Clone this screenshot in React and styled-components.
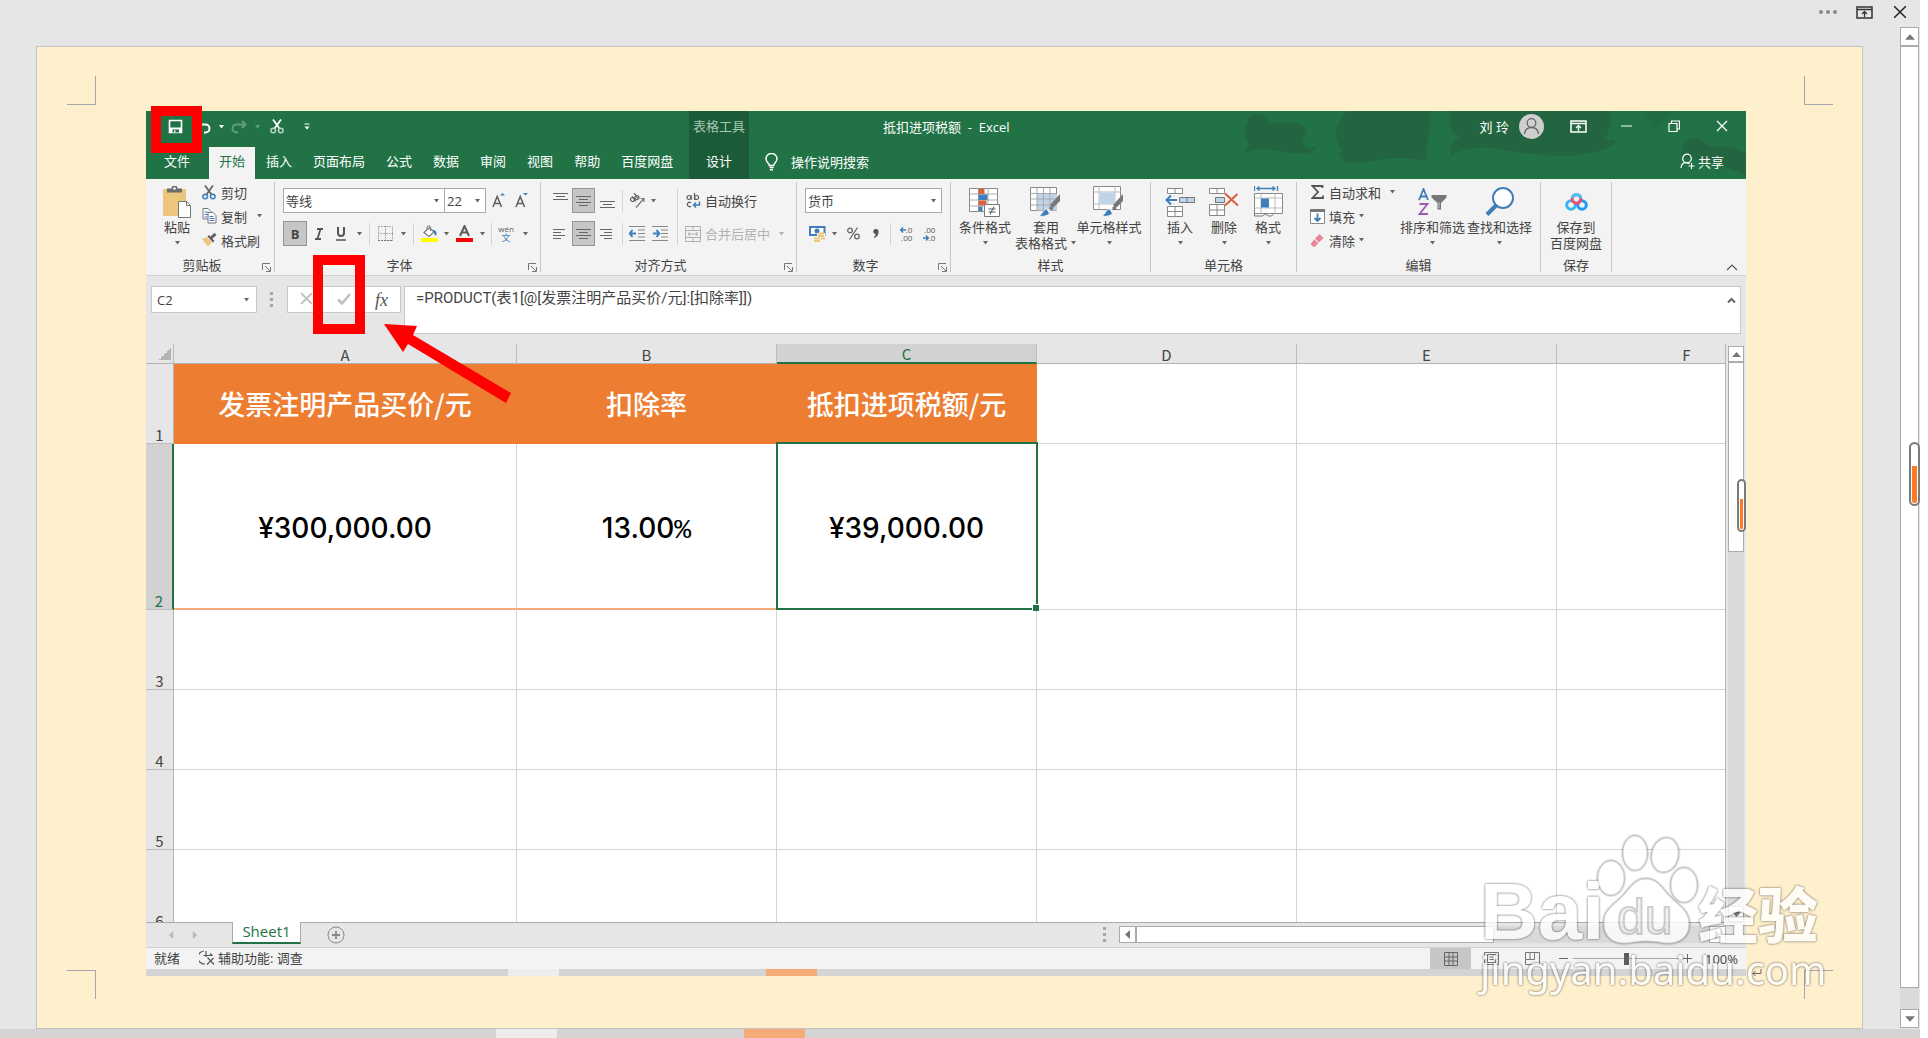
import * as React from "react";
import styled, { createGlobalStyle, css } from "styled-components";

// Styles
const colors = {
  excel: "#217346",
  excelDark: "#1b5b38",
  chrome: "#e6e6e6",
  ribbon: "#f3f3f3",
  line: "#ababab",
  gridLine: "#d4d4d4",
  paper: "#fff0cd",
  orange: "#ed7d31",
  mark: "#ff0000",
  blue: "#3f7dbb",
  text: "#444444",
};

const uiFont = `"Open Sans", "Noto Sans CJK SC", sans-serif`;
const cellFont = `"Noto Sans CJK SC", sans-serif`;

const GlobalStyle = createGlobalStyle`
  * {
    box-sizing: border-box;
  }

  body {
    margin: 0;
    background: #fff;
    font-family: ${uiFont};
    font-size: 13px;
    color: ${colors.text};
  }

  button,
  input,
  select,
  textarea {
    font: inherit;
    color: inherit;
    margin: 0;
    padding: 0;
    border: 0;
    border-radius: 0;
    background: none;
    outline: none;
  }
`;

// Word frame
const Frame = styled.div`
  display: flex;
  flex-direction: column;
  height: 100vh;
  margin-right: 8px;
  background: ${colors.chrome};
  overflow: hidden;
`;

const FrameBar = styled.header`
  display: flex;
  justify-content: flex-end;
  align-items: center;
  height: 27px;
  padding-bottom: 3px;
`;

const FrameButton = styled.button`
  display: flex;
  justify-content: center;
  align-items: center;
  width: ${(p) => p.$width}px;
  height: 20px;
`;

const Workspace = styled.div`
  display: flex;
  flex: 1;
  min-height: 0;
`;

const Sheet = styled.main`
  position: relative;
  display: flex;
  flex: 1;
  min-width: 0;
  margin: 19px 37px 0 36px;
  padding: 64px 116px 52px 109px;
  background: ${colors.paper};
  border: 1px solid #c3c3c3;
`;

const CropMark = styled.span`
  position: absolute;
  width: 29px;
  height: 29px;
  border: 0 solid #a6a7ad;
  ${(p) => (p.$top ? "top: 29px; border-bottom-width: 1px;" : "bottom: 29px; border-top-width: 1px;")}
  ${(p) => (p.$left ? "left: 30px; border-right-width: 1px;" : "right: 29px; border-left-width: 1px;")}
`;

const TaskStrip = styled.div`
  flex: none;
  height: ${(p) => p.$height}px;
  background: linear-gradient(#f4ab77, #f4ab77) ${(p) => p.$orange}px 0 / ${(p) => p.$size}px 100% no-repeat,
    linear-gradient(#ededed, #ededed) ${(p) => p.$light}px 0 / ${(p) => p.$size}px 100% no-repeat, #d4d4d4;
`;

// Scroll bars
const ScrollColumn = styled.div`
  position: relative;
  display: flex;
  flex-direction: column;
  flex: none;
  width: ${(p) => p.$size}px;
  margin: ${(p) => p.$margin};
  background: #dadada;
`;

const ScrollRow = styled.div`
  display: flex;
  width: 607px;
  height: 17px;
  background: #dadada;
`;

const ScrollButton = styled.button`
  display: flex;
  flex: none;
  justify-content: center;
  align-items: center;
  width: ${(p) => p.$size}px;
  height: ${(p) => p.$size}px;
  background: #fff;
  border: 1px solid ${colors.line};
`;

const Thumb = styled.div`
  flex: ${(p) => p.$flex};
  background: #fff;
  border: 1px solid ${colors.line};
`;

const Spacer = styled.div`
  flex: ${(p) => p.$flex || 1};
`;

const Pill = styled.span`
  position: absolute;
  top: ${(p) => p.$top}px;
  right: ${(p) => p.$right}px;
  width: ${(p) => p.$width}px;
  height: ${(p) => p.$height}px;
  padding: 1px;
  border: 2px solid #7b7b7b;
  border-radius: 6px;
  background: linear-gradient(#fff 36%, #ff7a21 36%) content-box, #fff;
`;

// Excel window
const Excel = styled.section`
  position: relative;
  display: flex;
  flex-direction: column;
  flex: 1;
  min-width: 0;
  background: ${colors.chrome};
`;

const Header = styled.div`
  position: relative;
  display: grid;
  grid-template-columns: 543px 60px 1fr;
  grid-template-rows: 36px 32px;
  flex: none;
  background: ${colors.excel};
  color: #fff;
`;

const Doodles = styled.svg`
  position: absolute;
  top: 0;
  right: 0;
  opacity: 0.85;
`;

const QuickAccess = styled.div`
  display: flex;
  align-items: center;
  padding: 0 0 5px 15px;
`;

const QuickButton = styled.button`
  display: flex;
  justify-content: center;
  align-items: center;
  width: ${(p) => p.$width}px;
  height: 24px;
  opacity: ${(p) => (p.disabled ? 0.3 : 1)};
`;

const ContextLabel = styled.div`
  padding-top: 5px;
  line-height: 20px;
  text-align: center;
  background: ${colors.excelDark};
  color: #a3c7b1;
`;

const TitleArea = styled.div`
  position: relative;
  display: flex;
  align-items: center;
  padding: 0 0 6px 134px;
`;

const DocTitle = styled.h1`
  margin: 0;
  font-size: 13px;
  font-weight: 400;
  white-space: pre;
`;

const UserName = styled.span`
  margin-left: auto;
  margin-right: 10px;
`;

const WindowButtons = styled.div`
  display: flex;
  margin-left: 10px;
`;

const WindowButton = styled.button`
  display: flex;
  justify-content: center;
  align-items: center;
  width: 48px;
  height: 24px;
`;

const Tabs = styled.nav`
  display: flex;
  gap: 1px;
`;

const Tab = styled.button`
  padding: 0 ${(p) => (p.$wide ? 18 : 10)}px 5px;
  ${(p) =>
    p.$active &&
    css`
      background: ${colors.ribbon};
      color: ${colors.excel};
    `}
  ${(p) =>
    p.$context &&
    css`
      background: ${colors.excelDark};
    `}
`;

const SearchArea = styled.div`
  position: relative;
  display: flex;
  justify-content: space-between;
  align-items: center;
  padding: 0 22px 3px 16px;
`;

const HeaderAction = styled.button`
  display: flex;
  align-items: center;
  gap: ${(p) => p.$gap}px;
`;

// Ribbon
const Ribbon = styled.div`
  position: relative;
  display: flex;
  flex: none;
  height: 97px;
  background: ${colors.ribbon};
  border-bottom: 1px solid #d0d0d0;
`;

const Group = styled.div`
  flex: none;
  width: ${(p) => p.$width}px;
  border-right: 1px solid transparent;
  border-image: linear-gradient(transparent 4px, #c6c6c6 4px, #c6c6c6 92px, transparent 92px) 1;
`;

const GroupContent = styled.div`
  display: flex;
  height: 78px;
  padding: 1px 0 0 ${(p) => p.$left}px;
`;

const GroupFooter = styled.div`
  display: flex;
  align-items: center;
  height: 16px;
  line-height: 16px;
`;

const GroupName = styled.span`
  flex: 1;
  text-align: center;
`;

const Launcher = styled.button`
  display: flex;
  align-items: center;
  width: 12px;
  height: 16px;
  margin-left: 4px;
  padding-top: 4px;
`;

const ToolRows = styled.div`
  display: flex;
  flex-direction: column;
  gap: 8px;
  padding-top: 8px;
`;

const ToolRow = styled.div`
  display: flex;
  align-items: center;
  height: 25px;
`;

const Tool = styled.button`
  display: flex;
  flex: none;
  justify-content: center;
  align-items: center;
  width: ${(p) => p.$width}px;
  height: 25px;
  ${(p) =>
    p.$pressed &&
    css`
      background: #c6c6c6;
      border: 1px solid #969696;
    `}
`;

const Divider = styled.span`
  flex: none;
  width: 1px;
  height: ${(p) => p.$height || 22}px;
  margin: 0 ${(p) => p.$gap}px;
  background: ${colors.gridLine};
`;

const SmallColumn = styled.div`
  width: ${(p) => p.$width}px;
`;

const SmallTool = styled.button`
  display: flex;
  align-items: center;
  height: 24px;
  white-space: nowrap;
  color: ${(p) => (p.disabled ? "#b1b1b1" : "inherit")};

  > svg:last-child {
    margin-left: ${(p) => p.$arrowGap}px;
  }
`;

const SmallIcon = styled.span`
  display: flex;
  justify-content: center;
  width: 22px;
  padding-right: 2px;
`;

const BigTool = styled.button`
  display: flex;
  flex-direction: column;
  align-items: center;
  width: ${(p) => p.$width}px;
  padding-top: 4px;
  line-height: 16px;
  white-space: nowrap;
`;

const BigIcon = styled.span`
  display: flex;
  align-items: center;
  height: 35px;
`;

const BigLine = styled.span`
  display: flex;
  align-items: center;
  justify-content: center;
  gap: 3px;
  height: 16px;
`;

const SelectBox = styled.label`
  position: relative;
  display: block;
  width: ${(p) => p.$width}px;
  height: 25px;
  margin-left: ${(p) => (p.$joined ? -1 : 0)}px;
  background: #fff;
  border: 1px solid ${colors.line};

  select {
    width: 100%;
    height: 100%;
    padding-left: 2px;
    appearance: none;
  }

  svg {
    position: absolute;
    top: 10px;
    right: 4px;
    pointer-events: none;
  }
`;

const Collapse = styled.button`
  display: flex;
  align-self: flex-end;
  margin: 0 8px 4px auto;
`;

// Formula bar
const FormulaBar = styled.div`
  display: flex;
  flex: none;
  height: 68px;
  padding: 10px 5px 10px;
`;

const NameBox = styled.div`
  display: flex;
  align-items: center;
  width: 106px;
  height: 27px;
  padding: 0 6px 0 5px;
  background: #fff;
  border: 1px solid #c8c8c8;

  input {
    flex: 1;
    min-width: 0;
  }
`;

const DotHandle = styled.span`
  width: 3px;
  height: 15px;
  margin: ${(p) => p.$margin};
  background: repeating-linear-gradient(#a6a6a6 0 3px, transparent 3px 6px);
`;

const FormulaButtons = styled.div`
  display: flex;
  align-items: center;
  justify-content: space-between;
  width: 114px;
  height: 27px;
  margin-right: 3px;
  padding: 0 12px;
  background: #fff;
  border: 1px solid #c8c8c8;
`;

const FxButton = styled.button`
  font-family: "Liberation Serif", serif;
  font-size: 18px;
  font-style: italic;
  line-height: 24px;
  color: #555;
`;

const FormulaInput = styled.div`
  display: flex;
  flex: 1;
  height: 48px;
  padding: 0 4px 0 11px;
  background: #fff;
  border: 1px solid #c8c8c8;

  textarea {
    flex: 1;
    font-family: Roboto, "Noto Sans CJK SC", sans-serif;
    font-size: 15px;
    line-height: 22px;
    resize: none;
    overflow: hidden;
  }

  button {
    align-self: flex-start;
    padding-top: 3px;
  }
`;

// Grid
const GridArea = styled.div`
  display: flex;
  flex: 1;
  min-height: 0;
  border-bottom: 1px solid ${colors.line};
`;

const GridViewport = styled.div`
  flex: 1;
  min-width: 0;
  overflow: hidden;
  border-right: 1px solid #b4b4b4;
  background: #fff;
`;

const Table = styled.table`
  width: 1671px;
  table-layout: fixed;
  border-collapse: separate;
  border-spacing: 0;
  font-family: ${cellFont};
  font-size: 27px;
  color: #000;

  th,
  td {
    padding: 0;
    text-align: center;
    border-right: 1px solid ${colors.gridLine};
    border-bottom: 1px solid ${colors.gridLine};
  }
`;

const ColumnHead = styled.th`
  && {
    height: 20px;
    font-size: 15px;
    font-weight: 400;
    line-height: 17px;
    vertical-align: bottom;
    color: ${(p) => (p.$active ? colors.excel : colors.text)};
    background: ${(p) => (p.$active ? "#d2d2d2" : colors.chrome)};
    border-right-color: #bdbdbd;
    border-bottom: ${(p) => (p.$active ? `2px solid ${colors.excel}` : "1px solid #b4b4b4")};
  }
`;

const CornerHead = styled(ColumnHead)`
  && {
    background: linear-gradient(135deg, transparent 50%, #b4b4b4 50%) 13px 4px / 12px 12px no-repeat
      ${colors.chrome};
  }
`;

const RowHead = styled.th`
  && {
    height: ${(p) => p.$height}px;
    font-size: 15px;
    font-weight: 400;
    line-height: 17px;
    vertical-align: bottom;
    color: ${(p) => (p.$active ? colors.excel : colors.text)};
    background: ${(p) => (p.$active ? "#d2d2d2" : colors.chrome)};
    border-right: ${(p) => (p.$active ? `2px solid ${colors.excel}` : "1px solid #b4b4b4")};
    border-bottom-color: #bdbdbd;
  }
`;

const Cell = styled.td`
  ${(p) =>
    p.$heading &&
    css`
      && {
        font-weight: 500;
        color: #fff;
        background: ${colors.orange};
        border-color: ${colors.orange};
      }
    `}
  ${(p) =>
    p.$value &&
    css`
      && {
        padding-top: 4px;
        font-family: Inter, sans-serif;
        font-size: 28px;
        font-weight: 500;
        border-bottom: 2px solid #f4a977;
      }
    `}
  ${(p) =>
    p.$selected &&
    css`
      position: relative;

      &:before {
        content: "";
        position: absolute;
        inset: -2px -2px -2px -1px;
        border: 2px solid ${colors.excel};
      }

      &:after {
        content: "";
        position: absolute;
        right: -3px;
        bottom: -3px;
        width: 6px;
        height: 6px;
        background: ${colors.excel};
        border: 1px solid #fff;
        border-width: 1px 0 0 1px;
      }
    `}
`;

const Percent = styled.span`
  font-family: "Liberation Mono", monospace;
  font-weight: 400;
`;

// Sheet tabs and status bar
const SheetBar = styled.div`
  display: flex;
  flex: none;
  height: 24px;
`;

const SheetNav = styled.div`
  display: flex;
  gap: 16px;
  width: 86px;
  padding: 0 0 1px 21px;

  button {
    display: flex;
    align-items: center;
  }
`;

const SheetTab = styled.button`
  width: 69px;
  height: 22px;
  margin-top: -1px;
  padding-bottom: 1px;
  font-size: 15px;
  line-height: 17px;
  color: ${colors.excel};
  background: #fff;
  border: 1px solid ${colors.line};
  border-width: 0 1px 2px;
  border-bottom-color: ${colors.excel};
`;

const AddSheet = styled.button`
  display: flex;
  margin: 3px auto 0 26px;
`;

const ScrollBox = styled.div`
  display: flex;
  padding: 3px 20px 0 0;
`;

const StatusBar = styled.footer`
  display: flex;
  flex: none;
  align-items: stretch;
  height: 22px;
  padding-left: 8px;
  background: ${colors.ribbon};
  border-top: 1px solid #d0d0d0;
`;

const StatusText = styled.span`
  display: flex;
  align-items: center;
  gap: 3px;
  margin-right: 19px;
  padding-bottom: 2px;
`;

const ViewButton = styled.button`
  display: flex;
  justify-content: center;
  align-items: center;
  width: 41px;
  background: ${(p) => (p.$active ? "#c6c6c6" : "transparent")};
`;

const Zoom = styled.div`
  display: flex;
  align-items: center;
  width: 190px;
  margin-left: 3px;
  padding-left: 3px;

  input {
    width: 106px;
    height: 20px;
    margin: 0 4px 0 5px;
    appearance: none;
    background: linear-gradient(#a6a6a6, #a6a6a6) 0 9px / 100% 1px no-repeat;
  }

  input::-webkit-slider-thumb {
    appearance: none;
    width: 5px;
    height: 12px;
    background: #5c5c5c;
  }

  output {
    margin-left: auto;
    padding-right: 8px;
  }
`;

// Tutorial marks
const MarkBox = styled.span`
  position: absolute;
  top: ${(p) => p.$top}px;
  left: ${(p) => p.$left}px;
  width: ${(p) => p.$width}px;
  height: ${(p) => p.$height}px;
  border: 10px solid ${colors.mark};
  pointer-events: none;
`;

const MarkArrow = styled.svg`
  position: absolute;
  top: 212px;
  left: 238px;
  pointer-events: none;
`;

const ReturnMark = styled.svg`
  position: absolute;
  right: 100px;
  bottom: 51px;
`;

const Watermark = styled.div`
  position: absolute;
  right: 34px;
  bottom: 32px;
  width: 348px;
  color: #fff;
  opacity: 0.8;
  filter: drop-shadow(0 0 1px rgba(0, 0, 0, 0.5)) drop-shadow(0 0 1px rgba(0, 0, 0, 0.3));
  pointer-events: none;
`;

const WatermarkRow = styled.div`
  position: relative;
  display: flex;
  align-items: flex-end;
  height: 112px;
`;

const WatermarkLatin = styled.span`
  width: 116px;
  font-family: "Liberation Sans", sans-serif;
  font-size: 80px;
  font-weight: 700;
  line-height: 64px;
`;

const WatermarkPaw = styled.svg`
  flex: none;
  fill: currentColor;
  stroke: #d0d0d0;
`;

const WatermarkDu = styled.span`
  position: absolute;
  left: 137px;
  bottom: 0;
  font-family: "Liberation Sans", sans-serif;
  font-size: 50px;
  line-height: 54px;
  color: #f0f0f0;
  -webkit-text-stroke: 2px #c4c4c4;
`;

const WatermarkCjk = styled.span`
  font-family: ${cellFont};
  font-size: 60px;
  font-weight: 900;
  line-height: 64px;
`;

const WatermarkUrl = styled.div`
  font-family: "Noto Sans", sans-serif;
  font-size: 40px;
  line-height: 52px;
  white-space: nowrap;
`;

// Icons
const Svg = ({ w, h, children, ...rest }) => (
  <svg width={w} height={h} viewBox={`0 0 ${w} ${h}`} fill="none" aria-hidden="true" {...rest}>
    {children}
  </svg>
);

const Arrow = ({ color = "#666" }) => (
  <Svg w={7} h={4}>
    <path d="M1 0h5L3.500 3.500z" fill={color} />
  </Svg>
);

const Triangle = ({ dir = "up", color = "#777", size = 9 }) => {
  const angle = { up: 0, right: 90, down: 180, left: 270 }[dir];
  return (
    <svg width={size} height={size} viewBox="0 0 9 9" aria-hidden="true">
      <path d="M4.500 2L9 7H0z" fill={color} transform={`rotate(${angle} 4.500 4.500)`} />
    </svg>
  );
};

const RibbonOptions = ({ color }) => (
  <Svg w={17} h={13} stroke={color}>
    <path d="M1 1h15v11H1zM1 3.500h15" strokeWidth="1.500" />
    <path d="M8.500 11V5.500M6 8l2.500-2.500L11 8" strokeWidth="1.300" />
  </Svg>
);

const Cross = ({ size = 12, color, width = 1.3 }) => (
  <svg width={size} height={size} viewBox="0 0 12 12" fill="none" stroke={color} strokeWidth={width} aria-hidden="true">
    <path d="M1 1l10 10M11 1L1 11" />
  </svg>
);

const SaveIcon = () => (
  <Svg w={15} h={15} stroke="#fff">
    <path d="M1.500 1.500h12v12h-12z" strokeWidth="1.600" />
    <path d="M1.500 8.500h12v5h-12z" fill="#fff" stroke="none" />
    <path d="M4.500 10.500h6.500v3H4.500z" fill={colors.excel} stroke="none" />
    <path d="M6 11.500h1.500v2H6z" fill="#fff" stroke="none" />
  </Svg>
);

const UndoIcon = ({ flip }) => (
  <Svg w={16} h={14} stroke="#fff" strokeWidth="2">
    <path
      d="M5 1L1.500 4.500 5 8M2 4.500h8.500a4 4 0 010 8H9"
      transform={flip ? "matrix(-1 0 0 1 16 0)" : undefined}
    />
  </Svg>
);

const ScissorsIcon = ({ blade, ring }) => (
  <Svg w={14} h={15} strokeWidth="1.500">
    <path d="M3 0.500l6.500 9M11 0.500l-6.500 9" stroke={blade} strokeWidth="1.800" />
    <circle cx="3.200" cy="11.500" r="2.300" stroke={ring} />
    <circle cx="10.800" cy="11.500" r="2.300" stroke={ring} />
  </Svg>
);

const QuickMore = () => (
  <Svg w={6} h={8}>
    <path d="M0.500 1h5" stroke="#fff" />
    <path d="M0.500 3.500h5L3 6.500z" fill="#fff" />
  </Svg>
);

const AvatarIcon = () => (
  <Svg w={25} h={25}>
    <circle cx="12.500" cy="12.500" r="12.500" fill="#cfcfcf" />
    <circle cx="12.500" cy="9" r="4.300" stroke="#666" strokeWidth="1.300" />
    <path d="M5.500 20c.4-4 3-6.500 7-6.500s6.600 2.500 7 6.500" stroke="#666" strokeWidth="1.300" />
  </Svg>
);

const ShareIcon = () => (
  <Svg w={15} h={17} stroke="#fff" strokeWidth="1.200">
    <circle cx="7" cy="5.500" r="4.300" />
    <path d="M1 15c.3-3.500 2-5.300 5-5.300 1.500 0 2.500.3 3.500 1M11.500 10v6M8.500 13h6" />
  </Svg>
);

const BulbIcon = () => (
  <Svg w={13} h={18} stroke="#fff" strokeWidth="1.400">
    <path d="M4.300 12.500c0-2.500-3.300-3.300-3.300-6.500a5.400 5.400 0 0111 0c0 3.200-3.300 4-3.300 6.500zM4.500 14.500h4.200M5 16.700h3" />
  </Svg>
);

const PasteIcon = () => (
  <Svg w={30} h={32}>
    <path d="M1 3h23v27H1z" fill="#ecc67d" />
    <path d="M5 2.500h4.500a3 3 0 016 0H20v4H5z" fill="#6b6b6b" />
    <circle cx="12.500" cy="2.500" r="1.300" fill="#fff" />
    <path d="M16.500 15.500h8l4 4v12h-12z" fill="#fff" stroke="#777" />
    <path d="M24.500 15.500v4h4" stroke="#777" />
  </Svg>
);

const CopyIcon = () => (
  <Svg w={15} h={16}>
    <path d="M1 .5h5l3 3V11H1z" fill="#fff" stroke="#777" />
    <path d="M2.500 4h4M2.500 6.500h4M2.500 9h3" stroke={colors.blue} />
    <path d="M6 4.500h5l3 3v7.500H6z" fill="#fff" stroke="#777" />
    <path d="M7.500 8.500h4M7.500 10.500h5M7.500 12.500h5" stroke={colors.blue} />
  </Svg>
);

const PainterIcon = () => (
  <Svg w={15} h={14}>
    <path d="M0 6l5-2 5 5.500L6 13.500z" fill="#ecc67d" />
    <path d="M5.500 3.500l5.500 6 1.500-1.500L7 2z" fill="#5d5d5d" />
    <path d="M9 5l4.500-4" stroke="#5d5d5d" strokeWidth="3" />
  </Svg>
);

const FontSizeIcon = ({ down }) => (
  <Svg w={15} h={15}>
    <path d="M1 14L5.200 3.500 9.500 14M2.500 10.500h5.500" stroke="#5d5d5d" strokeWidth="1.500" />
    <path d={down ? "M8 0h5l-2.500 2.500z" : "M8 2.500h5L10.500 0z"} fill={colors.blue} />
  </Svg>
);

const BordersIcon = () => (
  <Svg w={15} h={15} stroke="#999">
    <path d="M.5.5h14v14H.5zM7.500 0v15M0 7.500h15" strokeDasharray="1.500 1.200" />
    <path d="M0 14.500h15" stroke="#777" strokeDasharray="2 1" />
  </Svg>
);

const FillIcon = () => (
  <Svg w={17} h={17}>
    <path d="M3 7.500L8.500 2.500 13 7 8 11.500z" fill="#fff" stroke="#777" strokeWidth="1.200" />
    <path d="M6 5V2.500a1.700 1.700 0 013.400 0V6" stroke="#777" />
    <path d="M12 5c3 0 4.500 2.500 3 6-1.500-.5-1.500-3-3-6z" fill={colors.blue} />
    <path d="M0 13h17v4H0z" fill="#ffff00" />
  </Svg>
);

const FontColorIcon = () => (
  <Svg w={17} h={17}>
    <path d="M4 11L8.500 1 13 11M5.500 7.500h6" stroke="#5d5d5d" strokeWidth="2" />
    <path d="M0 13h17v4H0z" fill="#ff0000" />
  </Svg>
);

const PhoneticLabel = styled.span`
  display: flex;
  flex-direction: column;
  align-items: center;
  font-size: 8px;
  line-height: 8px;
  color: #5d5d5d;

  b {
    font-size: 9px;
    font-weight: 400;
    line-height: 10px;
    color: ${colors.blue};
  }
`;

const lineSets = {
  top: [["0 1 15", "3 4 9", "0 7 15"], 8],
  middle: [["0 1 15", "3 4 9", "0 7 15", "3 10 9"], 11],
  left: [["0 1 12", "0 4 8", "0 7 12", "0 10 8"], 11],
  right: [["0 1 12", "4 4 8", "0 7 12", "4 10 8"], 11],
};

const Lines = ({ kind }) => {
  const [lines, height] = lineSets[kind];
  return (
    <Svg w={15} h={height + 1}>
      {lines.map((line) => {
        const [x, y, w] = line.split(" ");
        return <rect key={line} x={x} y={y} width={w} height="1" fill="#666" />;
      })}
    </Svg>
  );
};

// Pushes a set of lines to the top or bottom of its button
const Shift = styled.span`
  display: flex;
  height: 17px;
  align-items: ${(p) => (p.$end ? "flex-end" : "flex-start")};
`;

const OrientationIcon = () => (
  <Svg w={17} h={16} stroke="#5d5d5d" strokeWidth="1.200">
    <circle cx="3.500" cy="6.500" r="2" />
    <path d="M3 3.500l4 4.500" />
    <circle cx="8" cy="4.500" r="2" />
    <path d="M5 0l4.500 6" />
    <path d="M7 14.500L15 5.500M11.500 5.500H15V9" stroke="#777" />
  </Svg>
);

const WrapIcon = () => (
  <Svg w={15} h={15} stroke="#5d5d5d" strokeWidth="1.200">
    <circle cx="3" cy="4.500" r="2" />
    <path d="M5.200 2.300v4.500M8.500 0v6.800" />
    <circle cx="10.600" cy="4.500" r="2" />
    <path d="M5 9.700a2.200 2.200 0 100 3.500" />
    <path d="M13.500 8.500v3.500H8M10 9.500L7.500 12l2.500 2.500" stroke={colors.blue} strokeWidth="1.500" />
  </Svg>
);

const MergeIcon = () => (
  <Svg w={16} h={16} stroke="#b4acb4">
    <path d="M.5.5h15v15H.5zM.5 4.500h15M.5 11.500h15M8 .5v4M8 11.500v4" />
    <path d="M3 8h10M5 6L3 8l2 2M11 6l2 2-2 2" />
  </Svg>
);

const IndentIcon = ({ right }) => (
  <Svg w={16} h={15}>
    <path d="M0 .5h16M9 4h7M9 7.500h7M9 11h7M0 14.500h16" stroke="#888" />
    <path
      d="M0 7.500h7M3.500 4L.7 7.500 3.500 11"
      stroke={colors.blue}
      strokeWidth="2"
      transform={right ? "matrix(-1 0 0 1 8 0)" : undefined}
    />
  </Svg>
);

const CurrencyIcon = () => (
  <Svg w={17} h={16}>
    <path d="M1 1h14.500v8H1z" fill="#fff" stroke={colors.blue} strokeWidth="2" />
    <circle cx="8" cy="5" r="2.500" fill={colors.blue} />
    <path d="M8 7h8v9H8z" fill={colors.ribbon} />
    <path d="M9 7.500h6M9 10h6M5 12.500h6M5 15h6M12 12.500h4" stroke="#ecc67d" strokeWidth="1.800" />
  </Svg>
);

const DecimalLabel = styled.span`
  display: flex;
  flex-direction: column;
  align-items: flex-end;
  font-size: 8px;
  line-height: 8px;
  color: #555;
`;

const DecimalLine = styled.span`
  display: flex;
  align-items: center;
  height: 8px;
`;

const SmallArrow = ({ right }) => (
  <Svg w={6} h={6} stroke={colors.blue} strokeWidth="1.500">
    <path d="M0 3h6M3 .5L.8 3 3 5.500" transform={right ? "matrix(-1 0 0 1 6 0)" : undefined} />
  </Svg>
);

const BrushOverlay = () => (
  <>
    <path d="M30 8v7L23 22l-3-3z" fill="#777" />
    <path d="M9 30c4-2 3-6 7-7 4 0 5 3 3 5-2 2-6 3-10 2z" fill={colors.blue} stroke="#f3f3f3" />
    <path d="M17 24c2-.5 3 1 2 3" fill="#fff" stroke="#fff" />
    <path d="M19 22l2-2 2.500 2.500-2 2z" fill="#777" />
  </>
);

const ConditionalIcon = () => (
  <Svg w={32} h={30}>
    <path d="M.5 1.500h28v23H.5z" fill="#fff" stroke="#888" />
    <path d="M.5 7h28M.5 13h28M.5 19h28M9.500 1.500v23M19 1.500v23" stroke="#aaa" />
    <path d="M9.500 2h6v5h-6zM9.500 13.500h8v5h-8z" fill="#d9603b" />
    <path d="M9.500 7.500h9v5.500h-9zM9.500 19.500h4V24h-4z" fill={colors.blue} />
    <path d="M15.500 17.500h15v12h-15z" fill="#fff" stroke="#777" />
    <path d="M19.500 22h7M19.500 25h7M25 19.500l-4 8" stroke="#555" />
  </Svg>
);

const TableStyleIcon = () => (
  <Svg w={32} h={31}>
    <path d="M.5 1.500h26v23H.5z" fill="#fff" stroke="#888" />
    <path d="M7 8h20v16.500H7z" fill="#c0d4e9" />
    <path d="M.5 7.500h26M.5 13h26M.5 19h26M7 1.500v23M13.500 1.500v23M20 1.500v23" stroke="#aaa" />
    <BrushOverlay />
  </Svg>
);

const CellStyleIcon = () => (
  <Svg w={32} h={31}>
    <path d="M.5.500h27v23H.5z" fill="#fff" stroke="#888" />
    <path d="M.5 6h27M.5 18h27M6 .500v23M22 .500v23" stroke="#bbb" />
    <path d="M6.500 6.500h15v11h-15z" fill="#c0d4e9" />
    <BrushOverlay />
  </Svg>
);

const InsertIcon = () => (
  <Svg w={30} h={30} stroke="#888">
    <path d="M2.500 1.500h15v5h-15zM10 1.500v5M2.500 19.500h15v10h-15zM10 19.500v10M2.500 24.500h15" fill="#fff" />
    <path d="M14.500 10.500h15v5h-15zM22 10.500v5" fill="#c0d4e9" stroke="#777" />
    <path d="M12 13H2M6 8.500L1.500 13 6 17.500" stroke={colors.blue} strokeWidth="2" />
  </Svg>
);

const DeleteIcon = () => (
  <Svg w={30} h={30} stroke="#888">
    <path d="M.5 1.500h15v5H.5zM8 1.500v5M.5 17.500h15v11H.5zM8 17.500v11M.5 23h15" fill="#fff" />
    <path d="M6.500 10.500h9v5h-9z" fill="#c0d4e9" stroke="#777" />
    <path d="M16 6.500l13 12M28.500 7L16 18.500" stroke="#d9603b" strokeWidth="2" />
  </Svg>
);

const FormatIcon = () => (
  <Svg w={29} h={31}>
    <path d="M.5 0v5M23.500 0v5M3 2.500h18M5.500.5L3 2.500l2.500 2M18.500.5l2.500 2-2.500 2" stroke={colors.blue} strokeWidth="1.300" />
    <path d="M.5 7.500h28v20H.5z" fill="#fff" stroke="#888" />
    <path d="M.5 12h28M.5 22h28M7 7.500v20M21 7.500v20" stroke="#bbb" />
    <path d="M7 12.500h8v9H7z" fill={colors.blue} />
    <path d="M.5 27v3h8l3-2 3 2h3l2-2" stroke="#777" />
  </Svg>
);

const SumIcon = () => (
  <Svg w={13} h={14}>
    <path d="M11.500 3V1H1.500L7 7l-5.500 6h10.500v-2.500" stroke="#555" strokeWidth="1.800" />
  </Svg>
);

const FillDownIcon = () => (
  <Svg w={15} h={15}>
    <path d="M.5 1.500h14v13H.5z" fill="#fff" stroke="#888" />
    <path d="M0 0h15v3H0z" fill="#777" />
    <path d="M7.500 4.500V12M4.500 9l3 3 3-3" stroke={colors.blue} strokeWidth="1.800" />
  </Svg>
);

const EraserIcon = () => (
  <Svg w={14} h={13}>
    <path d="M9.500 0l4 4L9 8.500l-4-4z" fill="#e8849a" />
    <path d="M4.300 5.300l4 4-3.500 3.500H3L.5 10z" fill="#e8849a" />
  </Svg>
);

const SortIcon = () => (
  <Svg w={29} h={28}>
    <path d="M1 12L5.500 1 10 12M2.500 8.500h6" stroke={colors.blue} strokeWidth="1.800" />
    <path d="M1.500 16h8L1.500 26h8.500" stroke="#9b59b6" strokeWidth="1.800" />
    <path d="M13.500 7h15v2.500L23 15v6.500h-3.500V15l-6-5.500z" fill="#777" />
    <path d="M21 14v6" stroke="#ccc" />
  </Svg>
);

const FindIcon = () => (
  <Svg w={29} h={29} stroke={colors.blue}>
    <circle cx="18" cy="11" r="10" fill="#fff" strokeWidth="2" />
    <path d="M11 18.500L2 27.500" strokeWidth="4" />
  </Svg>
);

const NetdiskIcon = () => (
  <Svg w={23} h={18} strokeWidth="3">
    <circle cx="6" cy="12" r="4.300" stroke="#35b6f2" />
    <circle cx="17" cy="12" r="4.300" stroke="#1c9cf5" />
    <circle cx="11.500" cy="6" r="4.300" stroke="#f0506e" />
    <path d="M7.300 5a4.300 4.300 0 018.400 0" stroke="#4cc3f0" />
  </Svg>
);

const LauncherIcon = () => (
  <Svg w={9} h={9} stroke="#777">
    <path d="M.5 7V.5H8M3 3l5 5M8.500 4v4.500H4" />
  </Svg>
);

const CheckIcon = () => (
  <Svg w={14} h={12} stroke="#c0c0c0" strokeWidth="2.500">
    <path d="M1 6.500l4 4L13 1" />
  </Svg>
);

const PlusCircle = () => (
  <Svg w={18} h={18} stroke="#888">
    <circle cx="9" cy="9" r="8" />
    <path d="M9 5v8M5 9h8" strokeWidth="1.800" />
  </Svg>
);

const AccessIcon = () => (
  <Svg w={16} h={15} stroke="#555" strokeWidth="1.200">
    <path d="M5 1A6.500 6.500 0 006 14M7 1v6M4.500 5.500h9M11 3.500l2.500 2M8.500 7.500L15 14.500M14.500 8L8 14.500" />
  </Svg>
);

const NormalViewIcon = () => (
  <Svg w={14} h={14} stroke="#666">
    <path d="M.5.5h13v13H.5zM5 .5v13M9 .5v13M.5 5h13M.5 9h13" />
  </Svg>
);

const PageViewIcon = () => (
  <Svg w={15} h={13} stroke="#777">
    <path d="M.5.5h14v12H.5zM3.500 2.500h8v8h-8zM5.500 5h4M5.500 7.500h4" />
  </Svg>
);

const BreakViewIcon = () => (
  <Svg w={15} h={13} stroke="#777">
    <path d="M.5.5h14v12H.5zM.5 7.500h9v-7M5 .5v7" />
  </Svg>
);

// Data
const tabs = ["插入", "页面布局", "公式", "数据", "审阅", "视图", "帮助", "百度网盘"];
const columns = [
  ["A", 343],
  ["B", 260],
  ["C", 260],
  ["D", 260],
  ["E", 260],
  ["F", 260],
];
const rows = [
  { height: 80, cells: ["发票注明产品买价/元", "扣除率", "抵扣进项税额/元"], heading: true },
  { height: 166, cells: ["¥300,000.00", "13.00%", "¥39,000.00"], active: true },
  { height: 80, cells: [] },
  { height: 80, cells: [] },
  { height: 80, cells: [] },
  { height: 80, cells: [] },
];

// Components
const RibbonGroup = ({ name, width, left = 8, launcher, children }) => (
  <Group $width={width}>
    <GroupContent $left={left}>{children}</GroupContent>
    <GroupFooter>
      <GroupName>{name}</GroupName>
      {launcher && (
        <Launcher aria-label={name}>
          <LauncherIcon />
        </Launcher>
      )}
    </GroupFooter>
  </Group>
);

const Big = ({ width, icon, label, second, noArrow }) => (
  <BigTool $width={width}>
    <BigIcon>{icon}</BigIcon>
    <BigLine>{label}</BigLine>
    <BigLine>
      {second}
      {!noArrow && <Arrow />}
    </BigLine>
  </BigTool>
);

const Small = ({ icon, label, arrowGap, disabled }) => (
  <SmallTool $arrowGap={arrowGap} disabled={disabled}>
    <SmallIcon>{icon}</SmallIcon>
    {label}
    {arrowGap && <Arrow color={disabled ? "#b1b1b1" : undefined} />}
  </SmallTool>
);

const Drop = ({ width, label }) => (
  <Tool $width={width} aria-label={label}>
    <Arrow />
  </Tool>
);

const Select = ({ width, value, label, joined }) => (
  <SelectBox $width={width} $joined={joined}>
    <select aria-label={label} defaultValue={value}>
      <option>{value}</option>
    </select>
    <Arrow />
  </SelectBox>
);

const ExcelHeader = () => (
  <Header>
    <Doodles width="510" height="68" viewBox="0 0 510 68" fill="#24633f" aria-hidden="true">
      <path d="M18 3C6 10 8 32 14 34c-4 4-6 6-5 8 20-10 38 3 62 0 6-1 10-4 8-6-8 3-12 0-12-8 12-20-14-16-32-16-4-8-10-10-17-9z" />
      <path d="M112 0c-16 12-14 32-4 40-8 0-6 10 8 12 22 0 36-10 76-2-6-12 4-20 2-50z" />
      <path d="M215 0c-4 14 0 22 8 26-6 4-10 12-8 19 26-16 50-4 84-2 30 4 60 2 80-10 2-8-4-2-12-4 8-8 8-20 8-29z" />
      <path d="M446 46c-4-20 18-26 26-10 14-2 28 0 38 6v22c-20-8-40-14-64-18z" />
      <path d="M440 0c-10 6-12 14-24 18l-10-18z" opacity=".4" />
    </Doodles>
    <QuickAccess>
      <QuickButton $width={28} aria-label="保存">
        <SaveIcon />
      </QuickButton>
      <QuickButton $width={28} aria-label="撤消">
        <UndoIcon />
      </QuickButton>
      <QuickButton $width={8} aria-label="撤消列表">
        <Arrow color="#fff" />
      </QuickButton>
      <QuickButton $width={28} disabled aria-label="恢复">
        <UndoIcon flip />
      </QuickButton>
      <QuickButton $width={8} disabled aria-label="恢复列表">
        <Arrow color="#fff" />
      </QuickButton>
      <QuickButton $width={32} aria-label="剪切">
        <ScissorsIcon blade="#fff" ring="#b9d3c4" />
      </QuickButton>
      <QuickButton $width={28} aria-label="自定义快速访问工具栏">
        <QuickMore />
      </QuickButton>
    </QuickAccess>
    <ContextLabel>表格工具</ContextLabel>
    <TitleArea>
      <DocTitle>{"抵扣进项税额  -  Excel"}</DocTitle>
      <UserName>刘 玲</UserName>
      <AvatarIcon />
      <WindowButtons>
        <WindowButton aria-label="功能区显示选项">
          <RibbonOptions color="#fff" />
        </WindowButton>
        <WindowButton aria-label="最小化">
          <Svg w={11} h={2}>
            <path d="M0 1h11" stroke="#fff" />
          </Svg>
        </WindowButton>
        <WindowButton aria-label="还原">
          <Svg w={12} h={12} stroke="#fff">
            <path d="M1 3.500h8v8H1zM3.500 3.500V1H11.500v8H9" strokeWidth="1.200" />
          </Svg>
        </WindowButton>
        <WindowButton aria-label="关闭">
          <Cross color="#fff" />
        </WindowButton>
      </WindowButtons>
    </TitleArea>
    <Tabs>
      <Tab $wide>文件</Tab>
      <Tab $active>开始</Tab>
      {tabs.map((tab) => (
        <Tab key={tab}>{tab}</Tab>
      ))}
    </Tabs>
    <Tab $context>设计</Tab>
    <SearchArea>
      <HeaderAction $gap={13}>
        <BulbIcon />
        操作说明搜索
      </HeaderAction>
      <HeaderAction $gap={3}>
        <ShareIcon />
        共享
      </HeaderAction>
    </SearchArea>
  </Header>
);

const ExcelRibbon = () => (
  <Ribbon>
    <RibbonGroup name="剪贴板" width={129} left={9} launcher>
      <Big width={44} icon={<PasteIcon />} label="粘贴" />
      <div>
        <Small icon={<ScissorsIcon blade="#666" ring={colors.blue} />} label="剪切" />
        <Small icon={<CopyIcon />} label="复制" arrowGap={9} />
        <Small icon={<PainterIcon />} label="格式刷" />
      </div>
    </RibbonGroup>

    <RibbonGroup name="字体" width={266} launcher>
      <ToolRows>
        <ToolRow>
          <Select width={162} value="等线" label="字体" />
          <Select width={42} value="22" label="字号" joined />
          <Tool $width={26} aria-label="增大字号">
            <FontSizeIcon />
          </Tool>
          <Tool $width={20} aria-label="减小字号">
            <FontSizeIcon down />
          </Tool>
        </ToolRow>
        <ToolRow>
          <Tool $width={24} $pressed>
            <b>B</b>
          </Tool>
          <Tool $width={24} aria-label="倾斜">
            <Svg w={8} h={12} stroke="#555" strokeWidth="1.800">
              <path d="M2 1h6M0 11h6M5.500 1l-3 10" />
            </Svg>
          </Tool>
          <Tool $width={20} aria-label="下划线">
            <Svg w={10} h={14} stroke="#555" strokeWidth="2">
              <path d="M2 0v6c0 4 6 4 6 0V0" />
              <path d="M0 13h10" strokeWidth="1.500" />
            </Svg>
          </Tool>
          <Drop width={16} label="下划线样式" />
          <Divider $gap={2} />
          <Tool $width={26} aria-label="边框">
            <BordersIcon />
          </Tool>
          <Drop width={10} label="边框样式" />
          <Divider $gap={5} />
          <Tool $width={20} aria-label="填充颜色">
            <FillIcon />
          </Tool>
          <Drop width={14} label="选择填充颜色" />
          <Tool $width={22} aria-label="字体颜色">
            <FontColorIcon />
          </Tool>
          <Drop width={14} label="选择字体颜色" />
          <Divider $gap={2} />
          <Tool $width={24}>
            <PhoneticLabel>
              <span>wén</span>
              <b>文</b>
            </PhoneticLabel>
          </Tool>
          <Drop width={14} label="拼音选项" />
        </ToolRow>
      </ToolRows>
    </RibbonGroup>

    <RibbonGroup name="对齐方式" width={256} launcher>
      <ToolRows>
        <ToolRow>
          <Tool $width={23} aria-label="顶端对齐">
            <Shift>
              <Lines kind="top" />
            </Shift>
          </Tool>
          <Tool $width={23} $pressed aria-label="垂直居中">
            <Lines kind="middle" />
          </Tool>
          <Tool $width={24} aria-label="底端对齐">
            <Shift $end>
              <Lines kind="top" />
            </Shift>
          </Tool>
          <Divider $gap={3} />
          <Tool $width={22} aria-label="方向">
            <OrientationIcon />
          </Tool>
          <Drop width={10} label="方向选项" />
        </ToolRow>
        <ToolRow>
          <Tool $width={23} aria-label="左对齐">
            <Lines kind="left" />
          </Tool>
          <Tool $width={23} $pressed aria-label="居中">
            <Lines kind="middle" />
          </Tool>
          <Tool $width={24} aria-label="右对齐">
            <Lines kind="right" />
          </Tool>
          <Divider $gap={3} />
          <Tool $width={22} aria-label="减少缩进量">
            <IndentIcon />
          </Tool>
          <Tool $width={24} aria-label="增加缩进量">
            <IndentIcon right />
          </Tool>
        </ToolRow>
      </ToolRows>
      <ToolRows>
        <Divider $height={57} $gap={5} />
      </ToolRows>
      <ToolRows>
        <ToolRow>
          <Small icon={<WrapIcon />} label="自动换行" />
        </ToolRow>
        <ToolRow>
          <Small icon={<MergeIcon />} label="合并后居中" arrowGap={8} disabled />
        </ToolRow>
      </ToolRows>
    </RibbonGroup>

    <RibbonGroup name="数字" width={154} launcher>
      <ToolRows>
        <ToolRow>
          <Select width={137} value="货币" label="数字格式" />
        </ToolRow>
        <ToolRow>
          <Tool $width={24} aria-label="会计数字格式">
            <CurrencyIcon />
          </Tool>
          <Drop width={10} label="会计格式选项" />
          <Tool $width={28} aria-label="百分比样式">
            <Svg w={13} h={13} stroke="#666" strokeWidth="1.300">
              <circle cx="3" cy="3.500" r="2.300" />
              <circle cx="10" cy="9.500" r="2.300" />
              <path d="M10.500 .5L2.500 12.500" />
            </Svg>
          </Tool>
          <Tool $width={18} aria-label="千位分隔样式">
            <Svg w={6} h={9}>
              <path d="M3 0a2.500 2.500 0 00-.5 5c0 1.500-.5 2-1.500 3l.5 1C4 8 5.500 6 5.500 3A2.500 2.500 0 003 0z" fill="#555" />
            </Svg>
          </Tool>
          <Divider $gap={5} />
          <Tool $width={20}>
            <DecimalLabel>
              <DecimalLine>
                <SmallArrow />
                .0
              </DecimalLine>
              <DecimalLine>.00</DecimalLine>
            </DecimalLabel>
          </Tool>
          <Tool $width={26}>
            <DecimalLabel>
              <DecimalLine>.00</DecimalLine>
              <DecimalLine>
                <SmallArrow right />
                .0
              </DecimalLine>
            </DecimalLabel>
          </Tool>
        </ToolRow>
      </ToolRows>
    </RibbonGroup>

    <RibbonGroup name="样式" width={200} left={4}>
      <Big width={60} icon={<ConditionalIcon />} label="条件格式" />
      <Big width={62} icon={<TableStyleIcon />} label="套用" second="表格格式" />
      <Big width={64} icon={<CellStyleIcon />} label="单元格样式" />
    </RibbonGroup>

    <RibbonGroup name="单元格" width={146} left={7}>
      <Big width={44} icon={<InsertIcon />} label="插入" />
      <Big width={44} icon={<DeleteIcon />} label="删除" />
      <Big width={44} icon={<FormatIcon />} label="格式" />
    </RibbonGroup>

    <RibbonGroup name="编辑" width={244} left={10}>
      <SmallColumn $width={92}>
        <Small icon={<SumIcon />} label="自动求和" arrowGap={8} />
        <Small icon={<FillDownIcon />} label="填充" arrowGap={3} />
        <Small icon={<EraserIcon />} label="清除" arrowGap={3} />
      </SmallColumn>
      <Big width={67} icon={<SortIcon />} label="排序和筛选" />
      <Big width={67} icon={<FindIcon />} label="查找和选择" />
    </RibbonGroup>

    <RibbonGroup name="保存" width={71} left={0}>
      <Big width={70} icon={<NetdiskIcon />} label="保存到" second="百度网盘" noArrow />
    </RibbonGroup>

    <Collapse aria-label="折叠功能区">
      <Svg w={12} h={7} stroke="#555" strokeWidth="1.200">
        <path d="M1 6l5-5 5 5" />
      </Svg>
    </Collapse>
  </Ribbon>
);

const ExcelFormulaBar = () => (
  <FormulaBar>
    <NameBox>
      <input aria-label="名称框" defaultValue="C2" />
      <Arrow />
    </NameBox>
    <DotHandle $margin="6px 14px 0 13px" />
    <FormulaButtons>
      <button aria-label="取消">
        <Cross color="#c0c0c0" width={1.8} size={13} />
      </button>
      <button aria-label="输入">
        <CheckIcon />
      </button>
      <FxButton>fx</FxButton>
    </FormulaButtons>
    <FormulaInput>
      <textarea
        aria-label="编辑栏"
        spellCheck={false}
        defaultValue="=PRODUCT(表1[@[发票注明产品买价/元]:[扣除率]])"
      />
      <button aria-label="折叠编辑栏">
        <Svg w={9} h={7} stroke="#666" strokeWidth="2">
          <path d="M1 5.500l3.500-3.500L8 5.500" />
        </Svg>
      </button>
    </FormulaInput>
  </FormulaBar>
);

const CellText = ({ text = "" }) =>
  text.endsWith("%") ? (
    <>
      {text.slice(0, -1)}
      <Percent>%</Percent>
    </>
  ) : (
    text
  );

const ExcelGrid = () => (
  <GridArea>
    <GridViewport>
      <Table>
        <colgroup>
          <col width="28" />
          {columns.map(([name, width]) => (
            <col key={name} width={width} />
          ))}
        </colgroup>
        <thead>
          <tr>
            <CornerHead />
            {columns.map(([name]) => (
              <ColumnHead key={name} scope="col" $active={name === "C"}>
                {name}
              </ColumnHead>
            ))}
          </tr>
        </thead>
        <tbody>
          {rows.map((row, index) => (
            <tr key={index}>
              <RowHead scope="row" $height={row.height} $active={row.active}>
                {index + 1}
              </RowHead>
              {columns.map(([name], i) => (
                <Cell
                  key={name}
                  $heading={row.heading && i < 3}
                  $value={row.active && i < 3}
                  $selected={row.active && name === "C"}
                >
                  <CellText text={row.cells[i]} />
                </Cell>
              ))}
            </tr>
          ))}
        </tbody>
      </Table>
    </GridViewport>
    <ScrollColumn $size={16} $margin="2px 2px 0 2px">
      <ScrollButton $size={16} aria-label="向上">
        <Triangle />
      </ScrollButton>
      <Thumb $flex={190} />
      <Spacer $flex={357} />
      <ScrollButton $size={16} aria-label="向下">
        <Triangle dir="down" />
      </ScrollButton>
      <Pill $top={133} $right={-2} $width={9} $height={53} />
    </ScrollColumn>
  </GridArea>
);

const ExcelFooter = () => (
  <>
    <SheetBar>
      <SheetNav>
        <button aria-label="上一个工作表">
          <Triangle dir="left" color="#bbb" size={8} />
        </button>
        <button aria-label="下一个工作表">
          <Triangle dir="right" color="#bbb" size={8} />
        </button>
      </SheetNav>
      <SheetTab>Sheet1</SheetTab>
      <AddSheet aria-label="新工作表">
        <PlusCircle />
      </AddSheet>
      <ScrollBox>
        <DotHandle $margin="1px 13px 0 0" />
        <ScrollRow>
          <ScrollButton $size={17} aria-label="向左">
            <Triangle dir="left" />
          </ScrollButton>
          <Thumb $flex={358} />
          <Spacer $flex={216} />
          <ScrollButton $size={17} aria-label="向右">
            <Triangle dir="right" />
          </ScrollButton>
        </ScrollRow>
      </ScrollBox>
    </SheetBar>
    <StatusBar>
      <StatusText>就绪</StatusText>
      <StatusText>
        <AccessIcon />
        辅助功能: 调查
      </StatusText>
      <Spacer />
      <ViewButton $active aria-label="普通">
        <NormalViewIcon />
      </ViewButton>
      <ViewButton aria-label="页面布局">
        <PageViewIcon />
      </ViewButton>
      <ViewButton aria-label="分页预览">
        <BreakViewIcon />
      </ViewButton>
      <Zoom>
        <Svg w={9} h={9}>
          <path d="M0 4.500h9" stroke="#666" />
        </Svg>
        <input type="range" aria-label="缩放" min="0" max="100" defaultValue="50" />
        <Svg w={9} h={9}>
          <path d="M0 4.500h9M4.500 0v9" stroke="#666" />
        </Svg>
        <output>100%</output>
      </Zoom>
    </StatusBar>
    <TaskStrip $height={7} $light={362} $orange={620} $size={51} />
  </>
);

const BaiduWatermark = () => (
  <Watermark>
    <WatermarkRow>
      <WatermarkLatin>Bai</WatermarkLatin>
      <WatermarkPaw width="102" height="113" viewBox="0 0 102 113" aria-hidden="true">
        <ellipse cx="15" cy="47" rx="13" ry="17" />
        <ellipse cx="39" cy="22" rx="12" ry="17" />
        <ellipse cx="69" cy="24" rx="13" ry="17" transform="rotate(12 69 24)" />
        <ellipse cx="88" cy="54" rx="13" ry="17" />
        <path d="M50 48c-12 0-16 10-24 18S7 80 8 93c0 11 8 20 22 19 8-1 12-2 20-2s12 1 20 2c14 1 23-7 23-19 0-13-11-19-19-27S62 48 50 48z" />
      </WatermarkPaw>
      <WatermarkDu>du</WatermarkDu>
      <WatermarkCjk>经验</WatermarkCjk>
    </WatermarkRow>
    <WatermarkUrl>jingyan.baidu.com</WatermarkUrl>
  </Watermark>
);

const App = () => {
  return (
    <>
      <GlobalStyle />
      <Frame>
        <FrameBar>
          <FrameButton $width={40} aria-label="更多">
            <Svg w={18} h={4}>
              <circle cx="2" cy="2" r="2" fill="#888" />
              <circle cx="9" cy="2" r="2" fill="#888" />
              <circle cx="16" cy="2" r="2" fill="#888" />
            </Svg>
          </FrameButton>
          <FrameButton $width={32} aria-label="功能区显示选项">
            <RibbonOptions color="#333" />
          </FrameButton>
          <FrameButton $width={40} aria-label="关闭">
            <Cross size={14} color="#222" />
          </FrameButton>
        </FrameBar>

        <Workspace>
          <Sheet>
            <CropMark $top $left />
            <CropMark $top />
            <CropMark $left />
            <CropMark />

            <Excel>
              <ExcelHeader />
              <ExcelRibbon />
              <ExcelFormulaBar />
              <ExcelGrid />
              <ExcelFooter />

              <MarkBox $top={-5} $left={5} $width={51} $height={47} />
              <MarkBox $top={144} $left={167} $width={52} $height={79} />
              <MarkArrow width="128" height="80" viewBox="0 0 128 80" fill={colors.mark} aria-hidden="true">
                <path d="M0 1l33 2-4 9 98 58-5 10L24 21l-5 8z" />
              </MarkArrow>
            </Excel>

            <ReturnMark width="10" height="8" viewBox="0 0 10 8" fill="none" stroke="#666" aria-hidden="true">
              <path d="M9 0v4.500H1M3.500 2L1 4.500 3.500 7" />
            </ReturnMark>
            <BaiduWatermark />
          </Sheet>

          <ScrollColumn $size={19} $margin="0 1px 1px 0">
            <ScrollButton $size={19} aria-label="向上">
              <Triangle size={10} />
            </ScrollButton>
            <Thumb $flex={941} />
            <Spacer $flex={21} />
            <ScrollButton $size={19} aria-label="向下">
              <Triangle dir="down" size={10} />
            </ScrollButton>
            <Pill $top={415} $right={-1} $width={11} $height={64} />
          </ScrollColumn>
        </Workspace>
        <TaskStrip $height={9} $light={496} $orange={744} $size={61} />
      </Frame>
    </>
  );
};

export default App;
